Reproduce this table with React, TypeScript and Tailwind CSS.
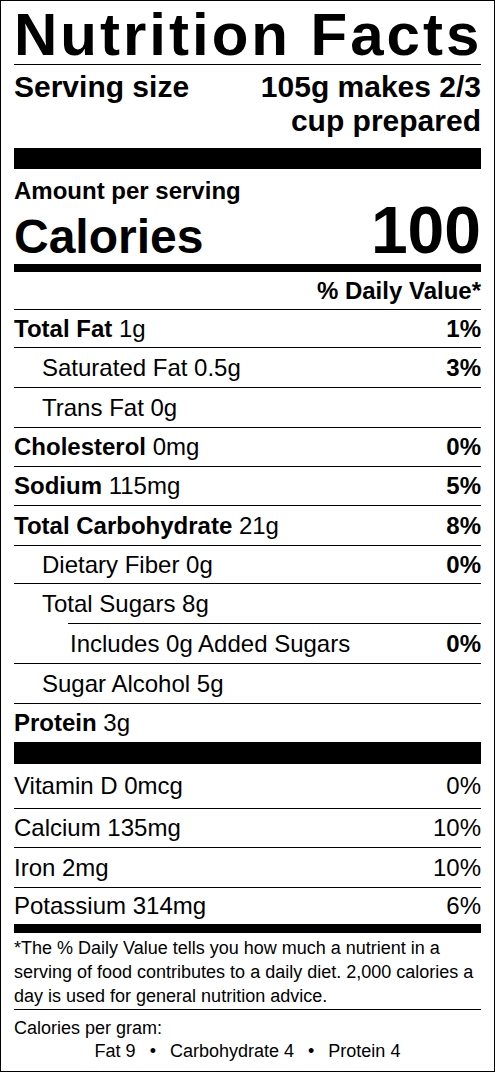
import { FC } from "react";

type Row = {
  name: string;
  amount?: string;
  dv?: string;
  bold?: boolean;
  indent?: number;
  h: string;
};

const rows: Row[] = [
  { name: "Total Fat", amount: "1g", dv: "1%", bold: true, h: "h-[38px]" },
  { name: "Saturated Fat", amount: "0.5g", dv: "3%", indent: 1, h: "h-[40px]" },
  { name: "Trans Fat", amount: "0g", indent: 1, h: "h-[40px]" },
  { name: "Cholesterol", amount: "0mg", dv: "0%", bold: true, h: "h-[39px]" },
  { name: "Sodium", amount: "115mg", dv: "5%", bold: true, h: "h-[39px]" },
  { name: "Total Carbohydrate", amount: "21g", dv: "8%", bold: true, h: "h-[40px]" },
  { name: "Dietary Fiber", amount: "0g", dv: "0%", indent: 1, h: "h-[38px]" },
  { name: "Total Sugars", amount: "8g", indent: 1, h: "h-[40px]" },
  { name: "Includes 0g Added Sugars", dv: "0%", indent: 2, h: "h-[40px]" },
  { name: "Sugar Alcohol", amount: "5g", indent: 1, h: "h-[40px]" },
  { name: "Protein", amount: "3g", bold: true, h: "h-[39px]" },
];

const vitamins = [
  { name: "Vitamin D 0mcg", dv: "0%", h: "h-[44px]", line: false },
  { name: "Calcium 135mg", dv: "10%", h: "h-[39px]", line: true },
  { name: "Iron 2mg", dv: "10%", h: "h-[40px]", line: true },
  { name: "Potassium 314mg", dv: "6%", h: "h-[37px]", line: true },
];

const NutrientRow: FC<{ row: Row }> = ({ row }) => (
  <div className={`${row.h} border-t border-black flex items-center justify-between ${row.indent === 2 ? "ml-[54px] pl-[2px]" : row.indent === 1 ? "pl-7" : ""}`}>
    <span>
      {row.bold ? <b>{row.name}</b> : row.name}
      {row.amount && <> {row.amount}</>}
    </span>
    {row.dv && <b>{row.dv}</b>}
  </div>
);

export default function App() {
  return (
    <div className="w-[495px] h-[1072px] border border-black bg-white px-[13px] text-black font-['Liberation_Sans',Arial,sans-serif]">
      <div className="h-[64px] border-b border-black pt-[4px]">
        <h1 className="text-[60px] leading-[60px] tracking-[3px] font-bold whitespace-nowrap">Nutrition Facts</h1>
      </div>

      <div className="h-[83px] pt-[5px] flex justify-between text-[30px] leading-[34px] font-bold">
        <span>Serving size</span>
        <span className="text-right">
          105g makes 2/3
          <br />
          cup prepared
        </span>
      </div>
      <div className="h-[21px] bg-black" />

      <div className="h-[95px] pt-[10px]">
        <div className="text-[24px] leading-[24px] font-bold">Amount per serving</div>
        <div className="mt-[2px] flex items-baseline justify-between font-bold">
          <span className="text-[48px] leading-none">Calories</span>
          <span className="text-[66px] leading-[50px]">100</span>
        </div>
      </div>
      <div className="h-[8px] bg-black" />

      <div className="text-[24px]">
        <div className="h-[37px] flex items-center justify-end font-bold">% Daily Value*</div>
        {rows.map((r) => (
          <NutrientRow key={r.name} row={r} />
        ))}
      </div>
      <div className="h-[22px] bg-black" />

      <div className="text-[24px]">
        {vitamins.map((v) => (
          <div key={v.name} className={`${v.h} ${v.line ? "border-t border-black" : ""} flex items-center justify-between`}>
            <span>{v.name}</span>
            <span>{v.dv}</span>
          </div>
        ))}
      </div>
      <div className="h-[9px] bg-black" />

      <div className="h-[77px] pt-[3px] border-b border-black text-[18px] leading-[24px]">
        *The % Daily Value tells you how much a nutrient in a serving of food contributes to a daily diet. 2,000 calories a day is used for general nutrition advice.
      </div>

      <div className="pt-[7px] text-[18px] leading-[23px]">
        <div>Calories per gram:</div>
        <div className="text-center">
          Fat 9<span className="mx-[14px]">•</span>Carbohydrate 4<span className="mx-[14px]">•</span>Protein 4
        </div>
      </div>
    </div>
  );
}
